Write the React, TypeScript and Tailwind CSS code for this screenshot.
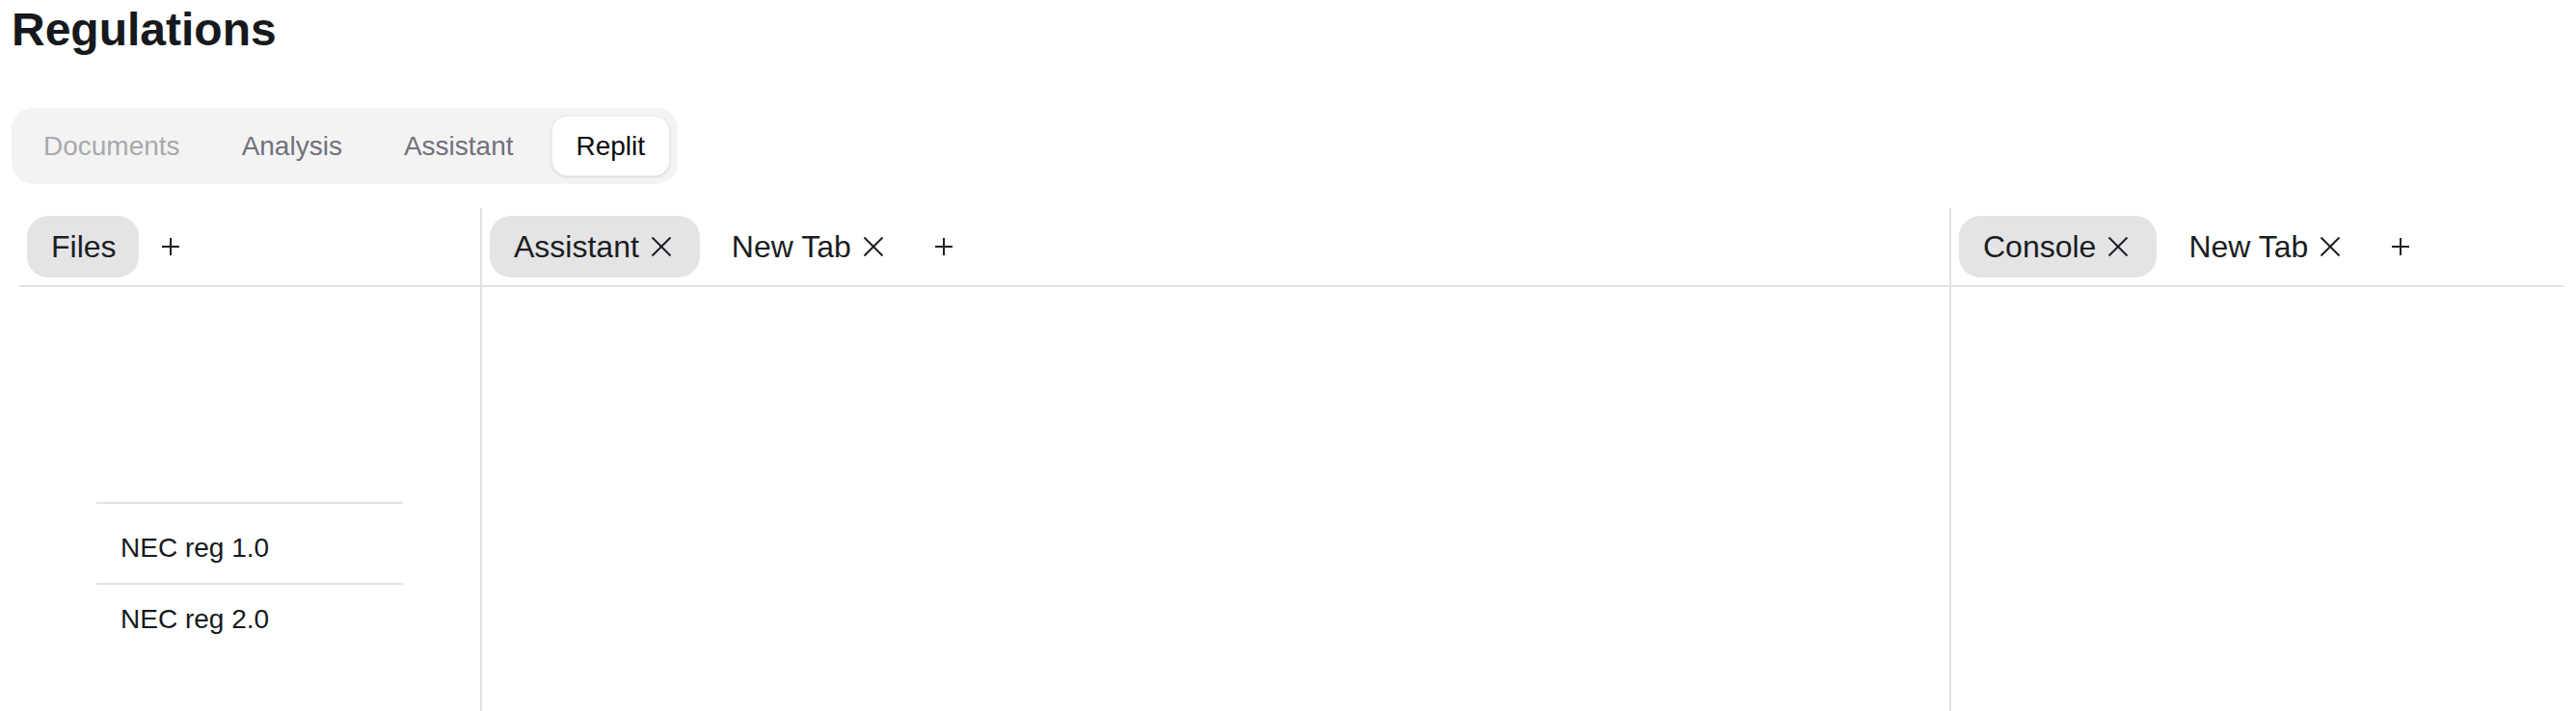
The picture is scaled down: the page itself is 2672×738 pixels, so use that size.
import React from 'react';

const XIcon = () => (
  <svg width="24" height="24" viewBox="0 0 24 24" fill="none" stroke="currentColor" strokeWidth="2" strokeLinecap="butt">
    <line x1="2.5" y1="2.5" x2="21.5" y2="21.5" />
    <line x1="21.5" y1="2.5" x2="2.5" y2="21.5" />
  </svg>
);

const PlusIcon = () => (
  <svg width="24" height="24" viewBox="0 0 24 24" fill="none" stroke="currentColor" strokeWidth="2" strokeLinecap="butt">
    <line x1="12" y1="3" x2="12" y2="21" />
    <line x1="3" y1="12" x2="21" y2="12" />
  </svg>
);

type Tab = { label: string; active?: boolean; closable?: boolean };

function PanelHeader({ tabs }: { tabs: Tab[] }) {
  return (
    <div className="flex items-center px-[8px] py-[8px] border-b-2 border-[#e2e2e3]">
      <div className="flex items-center gap-[8px]">
        {tabs.map((t) => (
          <div
            key={t.label}
            className={`flex items-center h-[64px] pl-[25px] ${t.closable ? 'pr-[28px] gap-[11px]' : 'pr-[23px]'} rounded-[22px] text-[32px] text-[#1a1d21] ${t.active ? 'bg-[#e4e4e6]' : ''}`}
          >
            <span>{t.label}</span>
            {t.closable && <XIcon />}
          </div>
        ))}
      </div>
      <div className="ml-[21px] text-[#1a1d21]">
        <PlusIcon />
      </div>
    </div>
  );
}

export default function App() {
  const topTabs = [
    { label: 'Documents', cls: 'text-[#a8a8ad]' },
    { label: 'Analysis', cls: 'text-[#71717a]' },
    { label: 'Assistant', cls: 'text-[#71717a]' },
    { label: 'Replit', cls: 'text-[#09090b] bg-white shadow-[0_1px_3px_rgba(0,0,0,0.12)] border border-[#ececec]' },
  ];

  return (
    <div className="min-h-screen flex flex-col bg-white px-[12px] font-['Liberation_Sans',Arial,sans-serif]">
      <h1 className="text-[48px] leading-[61px] font-bold text-[#16191d]">Regulations</h1>

      <div className="mt-[51px] self-start flex items-center gap-[14px] p-[8px] rounded-[22px] bg-[#f3f3f4]">
        {topTabs.map((t) => (
          <div key={t.label} className={`h-[63px] px-[25px] flex items-center rounded-[16px] text-[28px] ${t.cls}`}>
            {t.label}
          </div>
        ))}
      </div>

      <div className="mt-[25px] ml-[8px] flex-1 flex">
        {/* Files panel */}
        <div className="w-[480px] border-r-2 border-[#e2e2e3] flex flex-col">
          <PanelHeader tabs={[{ label: 'Files', active: true }]} />
          <div className="pt-[223px] px-[80px]">
            <div className="border-t-2 border-[#e2e2e3] pt-[10px] text-[28px] text-[#18191b]">
              <div className="px-[25px] py-[16px] leading-[40px]">NEC reg 1.0</div>
              <div className="px-[25px] py-[16px] leading-[40px] border-t-2 border-[#e2e2e3]">NEC reg 2.0</div>
            </div>
          </div>
        </div>

        {/* Assistant panel */}
        <div className="flex-1 border-r-2 border-[#e2e2e3] flex flex-col">
          <PanelHeader
            tabs={[
              { label: 'Assistant', active: true, closable: true },
              { label: 'New Tab', closable: true },
            ]}
          />
        </div>

        {/* Console panel */}
        <div className="w-[636px] flex flex-col">
          <PanelHeader
            tabs={[
              { label: 'Console', active: true, closable: true },
              { label: 'New Tab', closable: true },
            ]}
          />
        </div>
      </div>
    </div>
  );
}
